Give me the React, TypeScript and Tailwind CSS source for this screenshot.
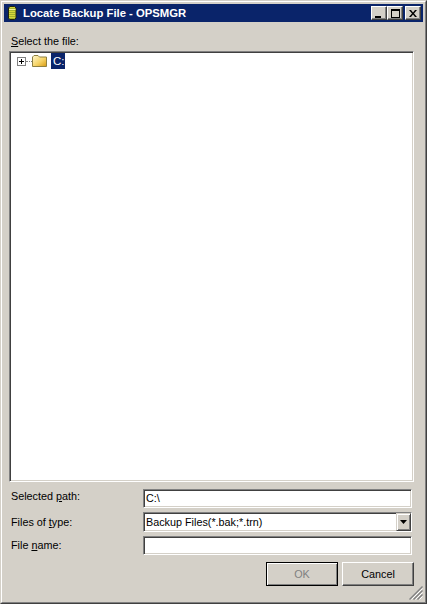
import type { ReactNode } from "react";

export default function App() {
  const sunken = "border border-t-[#808080] border-l-[#808080] border-b-white border-r-white shadow-[inset_1px_1px_0_#404040,inset_-1px_-1px_0_#d4d0c8]";
  return (
    <div className="w-[427px] h-[604px] bg-[#d4d0c8] border border-t-[#d4d0c8] border-l-[#d4d0c8] border-r-[#404040] border-b-[#404040] font-['Liberation_Sans',sans-serif] text-[10.8px] text-black overflow-hidden">
      <div className="h-full border border-t-white border-l-white border-r-[#808080] border-b-[#808080] p-[2px] flex flex-col">
        <div className="h-[18px] bg-[#0a246a] flex items-center pl-[2px] pr-[2px] shrink-0">
          <svg width="16" height="16" viewBox="0 0 16 16" className="shrink-0">
            <path d="M2.5 3 L4 1.5 H8.5 L10 3 V13 L8.5 14.5 H4 L2.5 13 Z" fill="#d6d83c" stroke="#20240c" />
            <path d="M4 3 V14 M6 3 V14 M8 3 V14" stroke="#6f8a24" strokeWidth="1" strokeDasharray="1 1" />
            <path d="M3 4.5 H9.5" stroke="#f4f4a0" />
          </svg>
          <span className="ml-[1px] text-white font-bold text-[11.3px] whitespace-nowrap">Locate Backup File - OPSMGR</span>
          <div className="ml-auto flex items-center">
            <WinBtn><div className="w-[6px] h-[2px] bg-black mt-[7px] -ml-[2px]" /></WinBtn>
            <WinBtn><div className="w-[9px] h-[9px] border border-black border-t-2" /></WinBtn>
            <div className="w-[2px]" />
            <WinBtn>
              <svg width="8" height="7" viewBox="0 0 8 7"><path d="M0 0 L2 0 L4 2.5 L6 0 L8 0 L5 3.5 L8 7 L6 7 L4 4.5 L2 7 L0 7 L3 3.5 Z" fill="#000" /></svg>
            </WinBtn>
          </div>
        </div>
        <div className="flex-1 flex flex-col pl-[5px] pr-[9px] min-h-0">
          <div className="mt-[12px] h-[14px] pl-[2px] leading-[14px] shrink-0"><u>S</u>elect the file:</div>
          <div className={"mt-[3px] h-[431px] bg-white shrink-0 pl-[7px] pt-[1px] flex items-start " + sunken}>
            <div className="flex items-center h-[16px]">
              <div className="w-[9px] h-[9px] border border-[#808080] bg-white flex items-center justify-center relative">
                <div className="absolute w-[5px] h-[1px] bg-black" />
                <div className="absolute w-[1px] h-[5px] bg-black" />
              </div>
              <div className="w-[6px] border-t border-dotted border-[#808080]" />
              <svg width="16" height="14" viewBox="0 0 16 14">
                <defs>
                  <linearGradient id="f" x1="0" y1="0" x2="1" y2="1">
                    <stop offset="0" stopColor="#fff8d0" />
                    <stop offset="0.55" stopColor="#f6d468" />
                    <stop offset="1" stopColor="#d89a10" />
                  </linearGradient>
                </defs>
                <path d="M0.5 3 L2 1.5 H6 L7.5 3 H14.5 V12.5 H0.5 Z" fill="url(#f)" stroke="#8f8040" />
              </svg>
              <div className="ml-[3px] bg-[#0a246a] text-white h-[16px] px-[2px] w-[14px] leading-[16px] text-[11.5px]">C:</div>
            </div>
          </div>
          <div className="flex flex-col pl-[2px] pr-[2px] mt-[7px] gap-[4px] shrink-0">
            <Row label={<>Selected <u>p</u>ath:</>} h="h-[19px]" labelClass="-mt-[5px]" sunken={sunken}><span className="pl-[2px]">C:\</span></Row>
            <Row label={<>Files of <u>t</u>ype:</>} h="h-[20px]" labelClass="" sunken={sunken}>
              <span className="pl-[2px]">Backup Files(*.bak;*.trn)</span>
              <div className="ml-auto w-[15px] h-[18px] bg-[#d4d0c8] border border-t-[#d4d0c8] border-l-[#d4d0c8] border-r-[#404040] border-b-[#404040] shadow-[inset_1px_1px_0_#fff,inset_-1px_-1px_0_#808080] flex items-center justify-center">
                <svg width="7" height="4" viewBox="0 0 7 4"><path d="M0 0 H7 L3.5 4 Z" fill="#000" /></svg>
              </div>
            </Row>
            <Row label={<>File <u>n</u>ame:</>} h="h-[19px]" labelClass="" sunken={sunken}></Row>
          </div>
          <div className="flex justify-end gap-[4px] mt-[7px] shrink-0">
            <div className="w-[72px] h-[24px] bg-[#d4d0c8] border border-black shadow-[inset_1px_1px_0_#fff,inset_-1px_-1px_0_#808080] flex items-center justify-center text-[#808080]">OK</div>
            <div className="w-[72px] h-[24px] bg-[#d4d0c8] border border-t-white border-l-white border-r-[#404040] border-b-[#404040] shadow-[inset_-1px_-1px_0_#808080] flex items-center justify-center">Cancel</div>
          </div>
          <div className="flex-1 relative">
            <svg width="14" height="14" viewBox="0 0 14 14" className="absolute right-[-9px] bottom-0">
              <path d="M13.5 0.5 L0.5 13.5 M13.5 4.5 L4.5 13.5 M13.5 8.5 L8.5 13.5" stroke="#808080" strokeWidth="1.4" />
              <path d="M13.5 2.5 L2.5 13.5 M13.5 6.5 L6.5 13.5 M13.5 10.5 L10.5 13.5" stroke="#ffffff" strokeWidth="1" />
            </svg>
          </div>
        </div>
      </div>
    </div>
  );
}

function WinBtn({ children }: { children?: ReactNode }) {
  return (
    <div className="w-[16px] h-[14px] bg-[#d4d0c8] border border-t-white border-l-white border-r-[#404040] border-b-[#404040] shadow-[inset_-1px_-1px_0_#808080] flex items-center justify-center">
      {children}
    </div>
  );
}

function Row({ label, h, labelClass, sunken, children }: { label: ReactNode; h: string; labelClass: string; sunken: string; children?: ReactNode }) {
  return (
    <div className={"flex items-center " + h}>
      <div className={"w-[132px] shrink-0 " + labelClass}>{label}</div>
      <div className={"w-[269px] h-full bg-white flex items-center " + sunken}>{children}</div>
    </div>
  );
}
